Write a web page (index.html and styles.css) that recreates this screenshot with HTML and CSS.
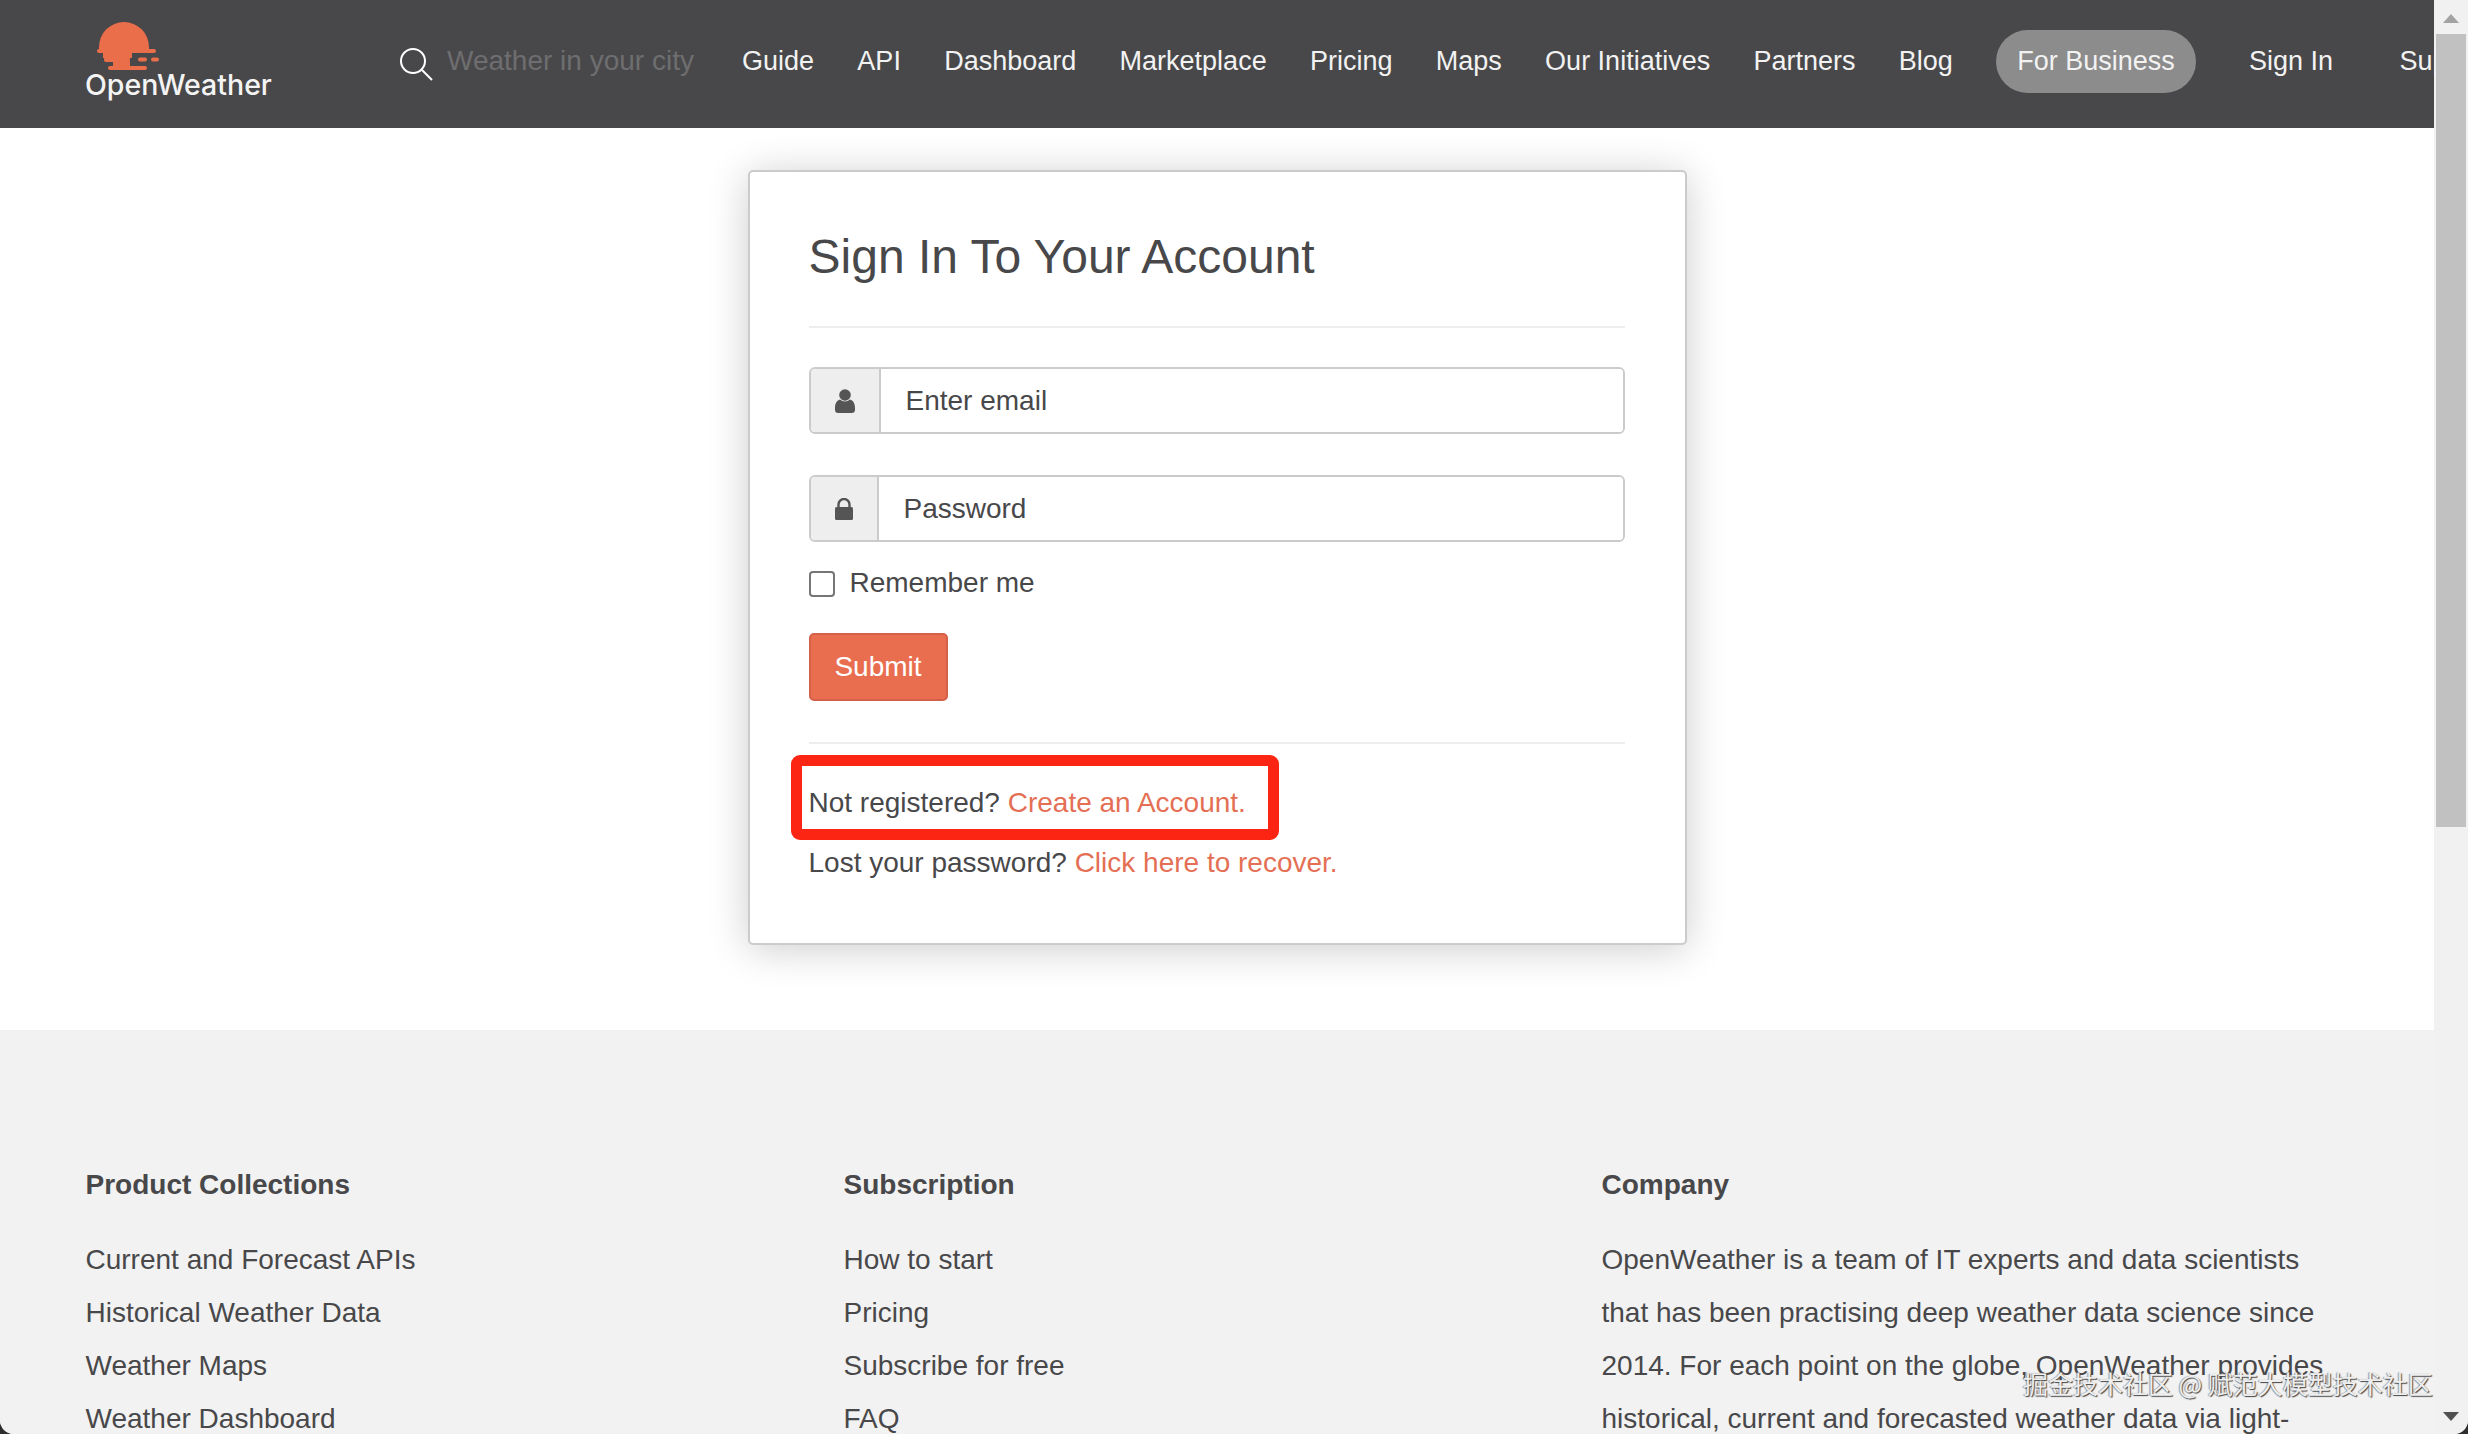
FILE: index.html
```html
<!DOCTYPE html>
<html lang="en">
<head>
<meta charset="utf-8">
<title>Sign In To Your Account - OpenWeather</title>
<link rel="stylesheet" href="styles.css">
</head>
<body>
<div class="window">
  <div class="page">
    <header class="topbar">
      <a class="logo" href="#">
        <svg class="logo-mark" viewBox="0 0 62 52" width="62" height="52" aria-hidden="true">
          <g fill="#eb6e4b">
            <path d="M2 31v-3a25 25 0 0 1 50 0v3z"/>
            <rect x="0" y="30" width="59" height="4" rx="2"/>
            <rect x="6" y="33" width="29" height="6"/>
            <rect x="7" y="38" width="26" height="5" rx="2"/>
            <rect x="16" y="42" width="17" height="6"/>
            <rect x="11" y="47" width="39" height="4" rx="2"/>
            <rect x="41" y="38.500" width="9" height="4" rx="2"/>
            <rect x="54" y="38.500" width="8" height="4" rx="2"/>
          </g>
        </svg>
        <span class="logo-text">OpenWeather</span>
      </a>
      <div class="search">
        <svg class="search-icon" viewBox="0 0 34 34" width="34" height="34" aria-hidden="true">
          <circle cx="14" cy="14" r="12" fill="none" stroke="#fff" stroke-width="2"/>
          <path d="M23 23l10 10" stroke="#fff" stroke-width="2" fill="none"/>
        </svg>
        <span class="search-placeholder">Weather in your city</span>
      </div>
      <nav class="nav">
        <a href="#">Guide</a>
        <a href="#">API</a>
        <a href="#">Dashboard</a>
        <a href="#">Marketplace</a>
        <a href="#">Pricing</a>
        <a href="#">Maps</a>
        <a href="#">Our Initiatives</a>
        <a href="#">Partners</a>
        <a href="#">Blog</a>
        <a class="pill" href="#">For Business</a>
        <a class="nav-signin" href="#">Sign In</a>
        <a class="nav-support" href="#">Support</a>
      </nav>
    </header>

    <main class="login-section">
      <section class="card">
        <h1 class="card-title">Sign In To Your Account</h1>
        <hr class="rule rule-top">
        <div class="input-group">
          <span class="addon addon-user">
            <svg viewBox="0 0 20 24" width="20" height="24" aria-hidden="true">
              <circle cx="10" cy="6" r="5.800" fill="#555"/>
              <path d="M0 19c0-5 2-7.500 5-8.500 1.500 1.300 3 2 5 2s3.500-.7 5-2c3 1 5 3.500 5 8.500v2c0 1.800-1.200 3-3 3H3c-1.800 0-3-1.200-3-3z" fill="#555"/>
            </svg>
          </span>
          <span class="field">Enter email</span>
        </div>
        <div class="input-group">
          <span class="addon addon-lock">
            <svg viewBox="0 0 18 22" width="18" height="22" aria-hidden="true">
              <path d="M3.500 9V6.500a5.500 5.500 0 0 1 11 0V9" fill="none" stroke="#555" stroke-width="2.400"/>
              <rect x="0" y="9" width="18" height="13" rx="1.500" fill="#555"/>
            </svg>
          </span>
          <span class="field">Password</span>
        </div>
        <label class="remember">
          <input class="check" type="checkbox">
          <span>Remember me</span>
        </label>
        <button class="submit" type="button">Submit</button>
        <hr class="rule rule-bottom">
        <div class="help">
          <p>Not registered? <a href="#">Create an Account.</a></p>
          <p>Lost your password? <a href="#">Click here to recover.</a></p>
          <div class="highlight"></div>
        </div>
      </section>
    </main>

    <footer class="footer">
      <div class="footer-col">
        <h2>Product Collections</h2>
        <ul>
          <li>Current and Forecast APIs</li>
          <li>Historical Weather Data</li>
          <li>Weather Maps</li>
          <li>Weather Dashboard</li>
        </ul>
      </div>
      <div class="footer-col">
        <h2>Subscription</h2>
        <ul>
          <li>How to start</li>
          <li>Pricing</li>
          <li>Subscribe for free</li>
          <li>FAQ</li>
        </ul>
      </div>
      <div class="footer-col">
        <h2>Company</h2>
        <p class="about">OpenWeather is a team of IT experts and data scientists that has been practising deep weather data science since 2014. For each point on the globe, OpenWeather provides historical, current and forecasted weather data via light-</p>
      </div>
    </footer>
  </div>

  <aside class="scrollbar" aria-hidden="true">
    <span class="arrow arrow-up"></span>
    <span class="thumb"></span>
    <span class="arrow arrow-down"></span>
  </aside>

  <div class="watermark">掘金技术社区 @ 赋范大模型技术社区</div>
</div>
</body>
</html>
```
FILE: styles.css
```css
* { box-sizing: border-box; }
html, body { margin: 0; padding: 0; height: 100%; background: #2e2e2e; }
body {
  font-family: "Liberation Sans", Arial, sans-serif;
  font-size: 28px;
  color: #48484a;
  overflow: hidden;
}
a { text-decoration: none; color: inherit; }

.window {
  position: relative;
  display: flex;
  width: 2468px;
  height: 1434px;
  overflow: hidden;
  background: #fff;
  border-radius: 0 0 14px 14px;
}
.page { flex: 0 0 2434px; width: 2434px; height: 1434px; overflow: hidden; }

/* top bar */
.topbar {
  display: flex;
  align-items: center;
  height: 128px;
  padding: 0 0 6px 85px;
  background: #48484a;
  overflow: hidden;
}
.logo {
  flex: none;
  display: flex;
  flex-direction: column;
  align-items: flex-start;
  width: 186px;
  margin-bottom: 4px;
}
.logo-mark { margin: 0 0 0 12px; display: block; }
.logo-text {
  font-family: Inter, "Liberation Sans", sans-serif;
  font-weight: 500;
  font-size: 28.500px;
  line-height: 30px;
  margin-top: -1px;
  color: #f4f4f4;
  white-space: nowrap;
}
.search {
  flex: none;
  display: flex;
  align-items: center;
  gap: 14px;
  margin-left: 128px;
  width: 343px;
}
.search-icon { display: block; margin-top: 5px; }
.search-placeholder { color: #6e6e70; font-size: 28px; white-space: nowrap; }
.nav {
  flex: none;
  display: flex;
  align-items: center;
  gap: 43.300px;
  font-size: 27px;
  color: #f2f2f2;
  white-space: nowrap;
}
.pill {
  display: flex;
  align-items: center;
  height: 63px;
  padding: 0 21px;
  border-radius: 32px;
  background: #8c8c8c;
}
.nav-signin { margin-left: 10px; }
.nav-support { margin-left: 23px; }

/* login card */
.login-section { padding: 42px 0 85px; background: #fff; }
.card {
  width: 939px;
  margin: 0 auto;
  padding: 56px 60px 50px 59px;
  background: #fff;
  border: 2px solid #cbcbcb;
  border-radius: 5px;
  box-shadow: 0 4px 40px rgba(0, 0, 0, .2);
}
.card-title {
  margin: 0;
  font-size: 48px;
  font-weight: 400;
  line-height: 58px;
}
.rule { margin: 0; height: 2px; border: 0; background: #eeeeee; }
.rule-top { margin: 40px 0 39px; }
.rule-bottom { margin-top: 41px; }
.input-group {
  display: flex;
  height: 67px;
  margin-bottom: 41px;
  border: 2px solid #cbcbcb;
  border-radius: 6px;
  overflow: hidden;
}
.input-group + .input-group { margin-bottom: 21px; }
.addon {
  flex: none;
  display: flex;
  align-items: center;
  justify-content: center;
  background: #eeeeee;
  border-right: 2px solid #cbcbcb;
}
.addon-user { width: 70px; }
.addon-lock { width: 68px; }
.field {
  flex: 1;
  display: flex;
  align-items: center;
  padding-left: 25px;
  background: #fff;
}
.remember {
  display: flex;
  align-items: center;
  gap: 15px;
  height: 40px;
}
.check {
  appearance: none;
  flex: none;
  width: 26px;
  height: 26px;
  margin: 2px 0 0;
  border: 2px solid #767676;
  border-radius: 4px;
  background: #fff;
}
.submit {
  display: block;
  width: 139px;
  height: 68px;
  margin: 30px 0 0;
  padding: 0;
  font: inherit;
  color: #fff;
  background: #e96e50;
  border: 2px solid #d5604a;
  border-radius: 5px;
}
.help { position: relative; padding-top: 29px; }
.help p { margin: 0; line-height: 60px; }
.help a { color: #e46f54; }
.highlight {
  position: absolute;
  left: -18px;
  top: 11px;
  width: 488px;
  height: 85px;
  border: 11px solid #fc2412;
  border-radius: 9px;
}

/* footer */
.footer {
  display: grid;
  grid-template-columns: repeat(3, 758px);
  height: 404px;
  padding: 135px 0 0 85.500px;
  background: #f2f2f2;
  overflow: hidden;
}
.footer h2 {
  margin: 0 0 28px;
  font-size: 28px;
  line-height: 40px;
  font-weight: 700;
}
.footer ul { margin: 0; padding: 0; list-style: none; }
.footer li { line-height: 53px; white-space: nowrap; }
.about { margin: 0; width: 724px; line-height: 53px; }

/* scrollbar */
.scrollbar {
  flex: 0 0 34px;
  display: flex;
  flex-direction: column;
  align-items: center;
  height: 1434px;
  padding: 0 2px;
  background: #f1f1f1;
}
.arrow { width: 0; height: 0; border-left: 8px solid transparent; border-right: 8px solid transparent; }
.arrow-up { margin: 14px 0 11px; border-bottom: 9px solid #a3a3a3; }
.arrow-down { margin-top: auto; margin-bottom: 13px; border-top: 9px solid #505050; }
.thumb { width: 100%; height: 793px; background: #c1c1c1; }

/* screenshot watermark */
.watermark {
  position: absolute;
  left: 2023px;
  top: 1368px;
  font-family: "Noto Sans CJK SC", sans-serif;
  font-size: 25px;
  line-height: 30px;
  white-space: nowrap;
  color: #eeeeee;
  text-shadow: 1px 1px 1px #444, -1px 0 1px #999;
}
```
